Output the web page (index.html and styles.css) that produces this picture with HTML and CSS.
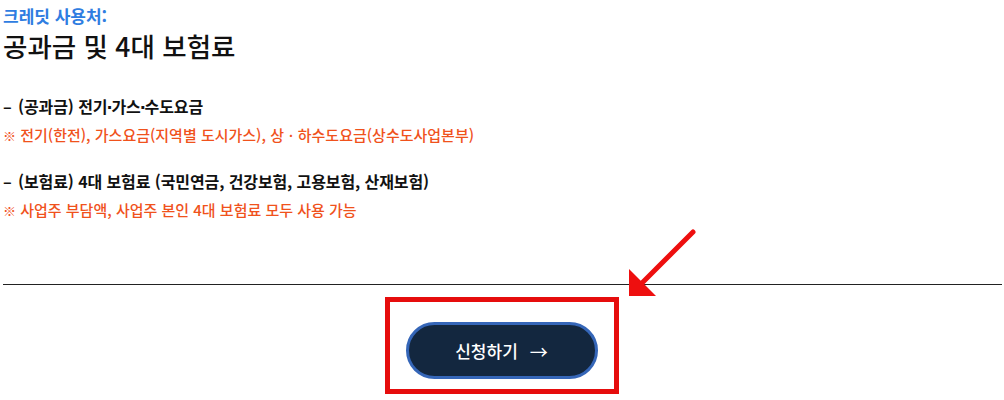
FILE: index.html
```html
<!DOCTYPE html>
<html lang="ko">
<head>
<meta charset="utf-8">
<link rel="stylesheet" href="styles.css">
</head>
<body>
<div class="page">
  <section class="info">
    <p class="label">크레딧 사용처:</p>
    <h1 class="title">공과금 및 4대 보험료</h1>
    <div class="items">
      <div class="item">
        <p class="item-head"><span class="dash">–</span>(공과금) 전기<span class="dot">·</span>가스<span class="dot">·</span>수도요금</p>
        <p class="note"><span class="mark">※</span> 전기(한전), 가스요금(지역별 도시가스), 상ㆍ하수도요금(상수도사업본부)</p>
      </div>
      <div class="item">
        <p class="item-head"><span class="dash">–</span>(보험료) 4대 보험료 (국민연금, 건강보험, 고용보험, 산재보험)</p>
        <p class="note"><span class="mark">※</span> 사업주 부담액, 사업주 본인 4대 보험료 모두 사용 가능</p>
      </div>
    </div>
  </section>
  <hr class="divider">
  <div class="action">
    <div class="highlight">
      <button class="apply">신청하기 <span class="arrow">→</span></button>
    </div>
    <svg class="pointer" width="80" height="80" viewBox="0 0 80 80">
      <line x1="72" y1="9" x2="20" y2="61" stroke="#ee0f0f" stroke-width="5" stroke-linecap="round"/>
      <polygon points="8,73 8,46 35,73" fill="#ee0f0f"/>
    </svg>
  </div>
</div>
</body>
</html>
```
FILE: styles.css
```css
html, body {
  margin: 0;
  padding: 0;
  background: #fff;
}
.page {
  position: relative;
  width: 1004px;
  height: 400px;
  font-family: "Noto Sans CJK KR", "Noto Sans", sans-serif;
  color: #111;
}
.info {
  padding: 0 0 0 3px;
}
.label {
  margin: 0;
  padding-top: 5px;
  font-size: 17px;
  line-height: 22px;
  font-weight: 700;
  color: #2f7de1;
}
.title {
  margin: 2px 0 0;
  font-size: 26.5px;
  line-height: 34px;
  font-weight: 500;
  color: #111;
}
.items {
  margin-top: 31px;
  display: flex;
  flex-direction: column;
  gap: 23px;
}
.item-head {
  margin: 0;
  font-size: 16px;
  line-height: 24px;
  font-weight: 700;
  color: #111;
  letter-spacing: -0.1px;
}
.dash {
  display: inline-block;
  width: 15px;
}
.dot {
  font-family: "DejaVu Sans", sans-serif;
  font-weight: 700;
  line-height: 1;
  margin: 0 -1px;
}
.note {
  margin: 6px 0 0;
  font-size: 15px;
  line-height: 22px;
  font-weight: 500;
  color: #f0521c;
}
.mark {
  font-weight: 700;
  font-size: 13px;
  line-height: 1;
}
.divider {
  margin: 63px 2px 0 3px;
  border: 0;
  border-top: 1px solid #222;
  height: 0;
}
.action {
  display: flex;
  justify-content: center;
  padding-top: 12px;
  position: relative;
  padding-right: 1px;
}
.highlight {
  box-sizing: border-box;
  width: 234px;
  height: 97px;
  border: 5px solid #e60d0d;
  display: flex;
  align-items: flex-start;
  justify-content: center;
  padding-top: 20px;
}
.apply {
  box-sizing: border-box;
  width: 192px;
  height: 57px;
  border-radius: 29px;
  border: 3px solid #3566b8;
  background: #13273f;
  color: #fff;
  font-family: "Noto Sans CJK KR", "Noto Sans", sans-serif;
  font-size: 17px;
  font-weight: 500;
  display: flex;
  align-items: center;
  justify-content: center;
  gap: 12px;
  padding: 0;
}
.arrow {
  font-size: 18px;
  font-weight: 400;
}
.pointer {
  position: absolute;
  left: 621px;
  top: -62px;
}
```
